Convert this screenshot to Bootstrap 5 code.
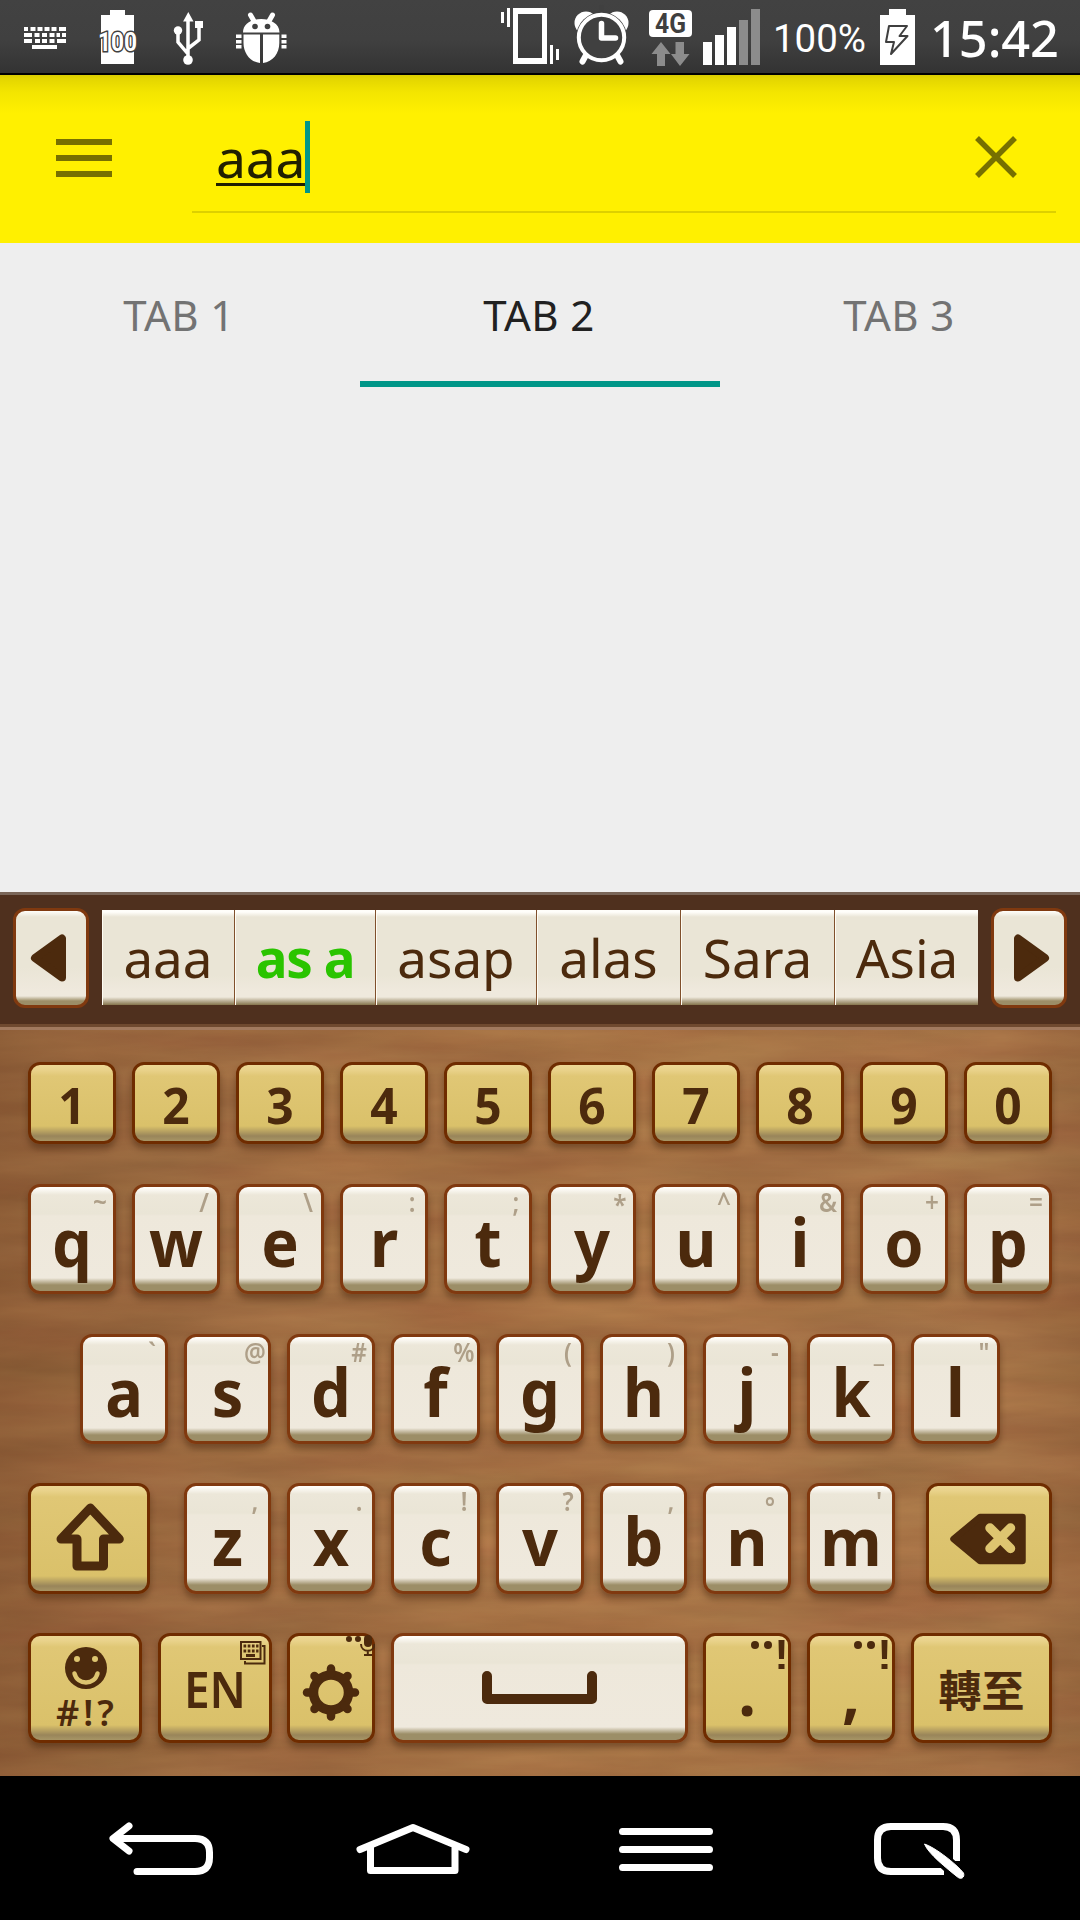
<!DOCTYPE html>
<html lang="en">
<head>
<meta charset="utf-8">
<meta name="viewport" content="width=device-width, initial-scale=1">
<title>Search tabs</title>
<link href="https://cdn.jsdelivr.net/npm/bootstrap@5.3.0/dist/css/bootstrap.min.css" rel="stylesheet">
<style>
body{width:1080px;height:1920px;overflow:hidden;background:#eee;font-family:"Noto Sans","Noto Sans CJK TC",sans-serif}
svg{display:block;flex:none}
.statusbar{height:75px;background:linear-gradient(#424242 0,#404040 40px,#333 73px);border-bottom:2px solid #000}
.searchbar{height:168px;background:linear-gradient(#d9cb00 0,#e3d500 3px,#f3e500 17px,#fff000 38px);padding:0 24px 0 56px}
.field{width:864px;height:138px;border-bottom:2px solid #ddd000;padding:46px 39px 0 24px}
.clear-icon{margin-top:15px}
.query{height:72px;font-size:53.5px;line-height:72px;color:#212000;border-right:5px solid #009688;letter-spacing:-.3px}
.query span{display:block;height:64.5px;border-bottom:3px solid #212000;line-height:73px}
.tabs{height:144px}
.tabs .tab-item{height:144px;line-height:144px;font-size:42px;font-weight:430;letter-spacing:.4px;color:#737373;border-bottom:6px solid transparent;padding:0 2px 0 0;text-align:center}
.tabs .current{color:#212121;border-color:#009688}
.blank{height:505px}
.suggest{height:138px;background:#4f301e;border-top:3px solid #796558;padding:0 13px;position:relative}
.suggest:after{content:"";position:absolute;left:0;right:0;bottom:0;height:6px;background:linear-gradient(#6f4a30 50%,#a17a5f 50%)}
.arrowkey{width:76px;height:100px;margin-top:13px;border:3px solid #80390f;border-radius:12px;background:linear-gradient(#fffefa 0,#eae5d6 6px,#eae5d6 60%,#efe9dd 85%,#efe9dd calc(100% - 9px),#9c8e67 calc(100% - 4px))}
.words{width:876px;height:95px;margin-top:15px;background:linear-gradient(#fffefa 2px,#eae5d6 7px,#eae5d6 68%,#efe9dd 85%,#efe9dd calc(100% - 8px),#85744c 100%)}
.words span{font-size:53px;line-height:96px;text-align:center;color:#4c2a0d;border-left:1px solid #fffdf4;box-shadow:-1px 0 #80502c;height:95px;padding-right:2px}
.words span:first-child{box-shadow:none}
.words .hit{color:#2ac400;font-weight:700;letter-spacing:-1.4px}
.w133{width:133px}.w141{width:141px}.w161{width:161px}.w144{width:144px}.w154{width:154px}.w143{width:143px}
.words .w143{padding:0}
.board{height:746px;position:relative;overflow:hidden;background:#a56f45}
.board .wood{position:absolute;left:0;top:0}
.keyrow{position:relative;display:flex;gap:16px;padding-left:28px}
.r0{padding-top:32px;height:154px}.r1{height:150px}.r2{height:149px;padding-left:80px}.r3{height:150px}.r4{height:143px}
.keycap{position:relative;flex:none;width:88px;height:110px;border:3px solid #80390f;border-radius:12px;color:#4c2a0d;text-align:center;font-size:67px;line-height:108px;box-shadow:0 5px 6px rgba(55,25,5,.4);background:linear-gradient(#fffefa 1px,#ece7d9 8px,#eae5d6 27px,#eee8db 29px,#efe9dd calc(100% - 13px),#9c8e67 calc(100% - 6px))}
.r3 .keycap{height:111px}
.gold{border-color:#6f2c00;background:linear-gradient(#ecd795 0,#e9d28a 5px,#e0c775 11px,#dac16a calc(100% - 15px),#99855a calc(100% - 5px),#a79565 100%)}
.r0 .keycap{height:82px;font-size:51px;line-height:78px}
.keycap b{display:block;height:100%;font-weight:720;transform:scaleX(.94)}
.keycap i{position:absolute;right:-3px;top:0;width:32px;display:flex;justify-content:center;font-style:normal;font-weight:650;font-size:27px;line-height:29px;color:#ae9f88;transform:scaleX(.9)}
.keycap .low{line-height:42px;right:2px}
.keycap .star{line-height:35px}
.keycap svg{position:absolute;left:-3px;top:-3px}
.r2 .k87,.r3 .k87,.r4 .k87{width:87px}.k89{width:89px}
.r3 .kshift{width:122px;margin-right:18px}.r3 .kback{width:126px;margin-left:15px}.k114{width:114px}.kspace{width:297px}.kgo{width:141px}
.tight{margin-left:-1px}
.keycap .sym{font-size:36px;line-height:36px;padding-top:59px;transform:none;font-weight:620;letter-spacing:4px;padding-left:4px}
.keycap .lang{font-size:51px;line-height:104px;font-weight:630;transform:scaleX(.9)}
.keycap .han{font-family:"Noto Sans CJK TC",sans-serif;font-size:43px;line-height:104px;transform:none;font-weight:700}
.navkeys{height:144px;background:#000}
</style>
<script src="https://cdn.jsdelivr.net/npm/bootstrap@5.3.0/dist/js/bootstrap.bundle.min.js"></script>
</head>
<body>
<header class="statusbar d-flex justify-content-between">
  <div class="d-flex">
    <svg width="80" height="73" viewBox="0 0 80 73" fill="#fff"><path d="M24 27h4v4h-4zM30.500 27h5v4h-5zM37.500 27h5v4h-5zM44.500 27h5v4h-5zM51.500 27h5v4h-5zM59 27h7v4h-7zM24 33h8v4h-8zM34.500 33h5v4h-5zM42 33h5v4h-5zM49.500 33h5v4h-5zM56.500 33h3.500v4h-3.500zM62 33h4v4h-4zM24 39h8v4h-8zM35 39h5v4h-5zM42 39h5v4h-5zM49.500 39h5v4h-5zM57 39h9v4h-9zM32 45h25v4h-25z"/></svg>
    <svg width="75" height="73" viewBox="80 0 75 73"><path fill="#fff" d="M101 15h9v-5h15v5h9v49h-33z"/><text x="117.500" y="50.500" font-family="Roboto" font-weight="700" font-size="26" textLength="39" lengthAdjust="spacingAndGlyphs" text-anchor="middle" fill="#fff" stroke="#404040" stroke-width="3" paint-order="stroke">100</text></svg>
    <svg width="60" height="73" viewBox="155 0 60 73"><g fill="none" stroke="#fff" stroke-width="3.500"><path d="M188 18v42M178 30v12l10 12M199 26v14l-11 8.500"/></g><path fill="#fff" d="M188.300 12l5.200 9.500h-10.400zM195 21h8v7h-8z"/><circle cx="178" cy="30.500" r="4.200" fill="#fff"/><circle cx="188" cy="60" r="4.800" fill="#fff"/></svg>
    <svg width="85" height="73" viewBox="215 0 85 73"><path stroke="#fff" stroke-width="5" stroke-linecap="round" d="M250.500 15l4 7M272.500 15l-4 7"/><path fill="#fff" d="M243 32.500c0-18 36.500-18 36.500 0zM243.500 34.500H260v28.500c-10-1-16.500-10-16.500-20zM263 34.500h16.300V43c0 10-6.300 19-16.300 20zM236 34.500h5.500v3.500h-5.500zM236 40h5.500v3.500h-5.500zM236 45h5.500v3.500h-5.500zM281.500 34.500h5v3.500h-5zM281.500 40h5v3.500h-5zM281.500 45h5v3.500h-5z"/><circle cx="255" cy="26.500" r="2.800" fill="#404040"/><circle cx="267.500" cy="26.500" r="2.800" fill="#404040"/></svg>
  </div>
  <div class="d-flex">
    <svg width="75" height="73" viewBox="490 0 75 73"><path fill="#fff" d="M501 12h3v11h-3zM507 8h3v19h-3zM550 45h3v19h-3zM556 49h3v11h-3z"/><path fill="#fff" fill-rule="evenodd" d="M513 8h34v56h-34zM518 14v44h24V14z"/></svg>
    <svg width="75" height="73" viewBox="565 0 75 73"><g fill="#fff"><circle cx="586" cy="23" r="11.500"/><circle cx="617" cy="23" r="11.500"/></g><path d="M601.500 5v20" stroke="#404040" stroke-width="5"/><circle cx="601.500" cy="37.500" r="25.500" fill="#404040"/><circle cx="601.500" cy="37.500" r="22.700" fill="none" stroke="#fff" stroke-width="4"/><path d="M601.500 23.500V38h14" fill="none" stroke="#fff" stroke-width="5.500" stroke-linecap="round" stroke-linejoin="round"/><path d="M585.500 56l-3 5.500M617.500 56l3 5.500" stroke="#fff" stroke-width="6" stroke-linecap="round"/></svg>
    <svg width="60" height="73" viewBox="640 0 60 73"><rect x="649" y="10" width="43" height="27" rx="4" fill="#fff"/><text x="670.500" y="33" text-anchor="middle" font-family="Roboto" font-weight="700" font-size="27" textLength="31" lengthAdjust="spacingAndGlyphs" fill="#3f3f3f">4G</text><path fill="#8c8c8c" d="M661 42l9.500 12h-5.500v12h-8V54h-5.500zM680 66l9.500-12h-5.500V42h-8.500v12h-4.500z"/></svg>
    <svg width="68" height="73" viewBox="700 0 68 73"><path fill="#fff" d="M703 42h9v23h-9zM715 35h9v30h-9zM727 27h9v38h-9z"/><path fill="#8c8c8c" d="M739 20h9v45h-9zM751 9h9v56h-9z"/></svg>
    <svg width="104" height="73" viewBox="768 0 104 73"><text x="773" y="52" font-family="Roboto" font-size="39" textLength="93" lengthAdjust="spacingAndGlyphs" fill="#fff">100%</text></svg>
    <svg width="53" height="73" viewBox="872 0 53 73"><path fill="#fff" d="M880 15h9V9h17v6h9v50h-35z"/><path d="M889 26h18l-7.500 10h8L891 54l3-12h-8z" fill="none" stroke="#3f3f3f" stroke-width="2" stroke-linejoin="round"/></svg>
    <svg width="155" height="73" viewBox="925 0 155 73"><text x="930" y="57" font-size="50.500" font-weight="500" textLength="129" fill="#fff" font-family="Noto Sans">15:42</text></svg>
  </div>
</header>

<nav class="searchbar d-flex justify-content-between">
  <svg width="56" height="168" viewBox="0 0 56 168"><path fill="#777000" d="M0 64h56v6H0zM0 80h56v6H0zM0 96h56v6H0z"/></svg>
  <div class="field d-flex justify-content-between align-items-start">
    <div class="query"><span>aaa</span></div>
    <svg class="clear-icon" width="42" height="42" viewBox="0 0 42 42"><path d="M2 2l38 38M40 2L2 40" stroke="#777000" stroke-width="5.500"/></svg>
  </div>
</nav>

<div class="tabs row g-0">
  <div class="col-4 tab-item">TAB 1</div>
  <div class="col-4 tab-item current">TAB 2</div>
  <div class="col-4 tab-item">TAB 3</div>
</div>
<main class="blank"></main>

<section class="suggest d-flex justify-content-between">
  <div class="arrowkey"><svg width="70" height="94" viewBox="16 911 70 94"><path d="M62 938.500v39l-27-19.500z" fill="#4c2a0d" stroke="#4c2a0d" stroke-width="8" stroke-linejoin="round"/></svg></div>
  <div class="words d-flex"><span class="w133">aaa</span><span class="w141 hit">as a</span><span class="w161">asap</span><span class="w144">alas</span><span class="w154">Sara</span><span class="w143">Asia</span></div>
  <div class="arrowkey"><svg width="70" height="94" viewBox="994 911 70 94"><path d="M1018 938.500v39l27-19.500z" fill="#4c2a0d" stroke="#4c2a0d" stroke-width="8" stroke-linejoin="round"/></svg></div>
</section>

<section class="board">
  <svg class="wood" width="1080" height="746">
    <defs>
      <filter id="grain" x="0" y="0" width="100%" height="100%" color-interpolation-filters="sRGB">
        <feTurbulence type="fractalNoise" baseFrequency=".005 .034" numOctaves="5" seed="11"/>
        <feColorMatrix values=".12 .05 0 0 .555  .12 0 .03 0 .365  .08 0 0 0 .23  0 0 0 0 1"/>
      </filter>
      <linearGradient id="edge"><stop offset="0" stop-color="#5c3218" stop-opacity=".32"/><stop offset=".2" stop-color="#5c3218" stop-opacity=".1"/><stop offset=".6" stop-color="#d08a40" stop-opacity=".07"/><stop offset=".93" stop-color="#5c3218" stop-opacity="0"/><stop offset="1" stop-color="#5c3218" stop-opacity=".14"/></linearGradient>
    </defs>
    <rect width="1080" height="746" filter="url(#grain)"/>
    <rect width="1080" height="746" fill="url(#edge)"/>
  </svg>
  <div class="keyrow r0">
    <div class="keycap gold"><b>1</b></div><div class="keycap gold"><b>2</b></div><div class="keycap gold"><b>3</b></div><div class="keycap gold"><b>4</b></div><div class="keycap gold"><b>5</b></div><div class="keycap gold"><b>6</b></div><div class="keycap gold"><b>7</b></div><div class="keycap gold"><b>8</b></div><div class="keycap gold"><b>9</b></div><div class="keycap gold"><b>0</b></div>
  </div>
  <div class="keyrow r1">
    <div class="keycap"><b>q</b><i>~</i></div><div class="keycap"><b>w</b><i>/</i></div><div class="keycap"><b>e</b><i>\</i></div><div class="keycap"><b>r</b><i>:</i></div><div class="keycap"><b>t</b><i>;</i></div><div class="keycap"><b>y</b><i class="star">*</i></div><div class="keycap"><b>u</b><i>^</i></div><div class="keycap"><b>i</b><i>&amp;</i></div><div class="keycap"><b>o</b><i>+</i></div><div class="keycap"><b>p</b><i>=</i></div>
  </div>
  <div class="keyrow r2">
    <div class="keycap"><b>a</b><i>`</i></div><div class="keycap k87"><b>s</b><i>@</i></div><div class="keycap"><b>d</b><i>#</i></div><div class="keycap k89"><b>f</b><i>%</i></div><div class="keycap"><b>g</b><i>(</i></div><div class="keycap k87"><b>h</b><i>)</i></div><div class="keycap"><b>j</b><i>-</i></div><div class="keycap"><b>k</b><i>_</i></div><div class="keycap k89"><b>l</b><i>"</i></div>
  </div>
  <div class="keyrow r3">
    <div class="keycap gold kshift"><svg width="122" height="111" viewBox="28 1483 122 111"><path d="M90.300 1508l29 31h-15.800v27h-26.500v-27H61z" fill="none" stroke="#4c2a0d" stroke-width="9" stroke-linejoin="round"/></svg></div>
    <div class="keycap k87"><b>z</b><i>,</i></div><div class="keycap"><b>x</b><i>.</i></div><div class="keycap k89"><b>c</b><i>!</i></div><div class="keycap"><b>v</b><i>?</i></div><div class="keycap k87"><b>b</b><i>,</i></div><div class="keycap"><b>n</b><i class="low">°</i></div><div class="keycap"><b>m</b><i>'</i></div>
    <div class="keycap gold kback"><svg width="126" height="111" viewBox="926 1483 126 111"><path d="M980 1517h42.500v44H980l-26.500-22z" fill="#4c2a0d" stroke="#4c2a0d" stroke-width="6.500" stroke-linejoin="round"/><path d="M990 1528l20.500 20.500M1010.500 1528L990 1548.500" stroke="#dec570" stroke-width="9.500" stroke-linecap="round"/></svg></div>
  </div>
  <div class="keyrow r4">
    <div class="keycap gold k114"><b class="sym">#!?</b><svg width="114" height="110" viewBox="28 1633 114 110"><circle cx="86" cy="1668" r="21" fill="#4c2a0d"/><circle cx="77" cy="1659" r="3" fill="#dec570"/><circle cx="95" cy="1659" r="3" fill="#dec570"/><path d="M74.500 1673.500c3 12 20 12 23 0" fill="none" stroke="#dec570" stroke-width="4.500" stroke-linecap="round"/></svg></div>
    <div class="keycap gold k114"><b class="lang">EN</b><svg width="114" height="110" viewBox="158 1633 114 110" fill="none" stroke="#4c2a0d" stroke-width="2"><path d="M241 1642h19.500v17H241zM262 1646h2.500v17.500H245v-2.500"/><path d="M243.500 1646h15M243.500 1651h15" stroke-width="3" stroke-dasharray="2.700 1.500"/><path d="M246 1655.500h9" stroke-width="3"/></svg></div>
    <div class="keycap gold tight"><svg width="88" height="110" viewBox="287 1633 88 110"><circle cx="331" cy="1692.500" r="17.500" fill="none" stroke="#4c2a0d" stroke-width="9.500"/><g stroke="#4c2a0d" stroke-width="8.500" stroke-linecap="round"><path d="M331 1668.500v5M331 1711.500v5M307 1692.500h5M350 1692.500h5M314.500 1676l3 3M344.500 1706l3 3M347.500 1676l-3 3M317.500 1706l-3 3"/></g><circle cx="349" cy="1639" r="3" fill="#4c2a0d"/><circle cx="358" cy="1639" r="3" fill="#4c2a0d"/><rect x="364" y="1635" width="8" height="12" rx="4" fill="#4c2a0d"/><path d="M361 1644c0 9 13.500 9 13.500 0M367.800 1650v4M364 1655h8" fill="none" stroke="#4c2a0d" stroke-width="2"/></svg></div>
    <div class="keycap kspace"><svg width="297" height="110" viewBox="391 1633 297 110"><path d="M487 1676v23h105v-23" fill="none" stroke="#4c2a0d" stroke-width="10" stroke-linecap="round" stroke-linejoin="round"/></svg></div>
    <div class="keycap gold tight"><b>.</b><svg width="88" height="110" viewBox="703 1633 88 110" fill="#4c2a0d"><circle cx="755" cy="1645" r="4"/><circle cx="768" cy="1645" r="4"/><path d="M778.500 1640h6l-.5 19h-5zM778.500 1664h6v5h-6z"/></svg></div>
    <div class="keycap gold"><b>,</b><svg width="88" height="110" viewBox="807 1633 88 110" fill="#4c2a0d"><circle cx="858" cy="1645" r="4"/><circle cx="871" cy="1645" r="4"/><path d="M881.500 1640h6l-.5 19h-5zM881.500 1664h6v5h-6z"/></svg></div>
    <div class="keycap gold kgo"><b class="han">轉至</b></div>
  </div>
</section>

<footer class="navkeys d-flex">
  <svg width="270" height="144" viewBox="0 1776 270 144" fill="none" stroke="#fff" stroke-width="7" stroke-linecap="round" stroke-linejoin="round"><path d="M129 1826l-16 12.500 16 12.500M114 1838.500h81q14.500 0 14.500 14v5q0 14-14.500 14H137"/></svg>
  <svg width="270" height="144" viewBox="270 1776 270 144" fill="none" stroke="#fff" stroke-width="7" stroke-linecap="round" stroke-linejoin="round"><path d="M360 1849.500l53-22 53 22M370.500 1847v23.500H455V1847"/></svg>
  <svg width="270" height="144" viewBox="540 1776 270 144" stroke="#fff" stroke-width="7" stroke-linecap="round"><path d="M622.500 1831.500h87M622.500 1849.500h87M622.500 1867.500h87"/></svg>
  <svg width="270" height="144" viewBox="810 1776 270 144"><path d="M944 1871.500h-53q-13.500 0-13.500-13.500v-18q0-13.500 13.500-13.500h52q13.500 0 13.500 13.500v21" fill="none" stroke="#fff" stroke-width="7"/><path d="M930 1848L966 1881" stroke="#000" stroke-width="15"/><path d="M924.500 1844c10 3 32 20 39 29 1.500 4.500-2.500 7-6 4-11-9-29-23-33-33z" fill="#fff" stroke="#fff" stroke-width="1"/></svg>
</footer>
</body>
</html>
